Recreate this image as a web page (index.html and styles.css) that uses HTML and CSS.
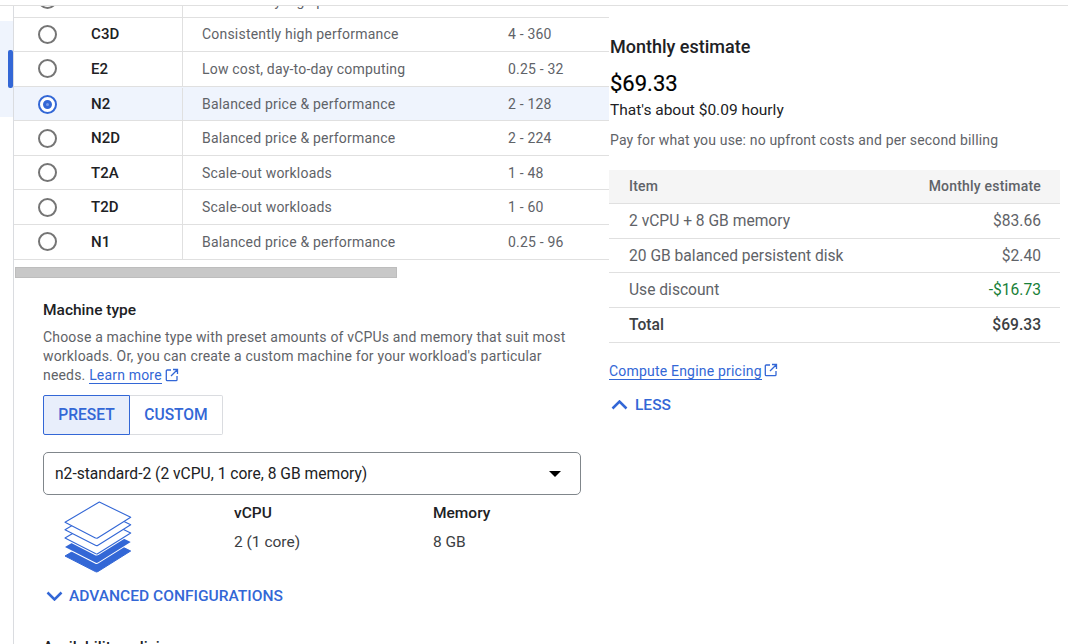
FILE: index.html
```html
<!DOCTYPE html>
<html lang="en">
<head>
<meta charset="utf-8">
<title>Machine configuration</title>
<link rel="stylesheet" href="styles.css">
</head>
<body>
<div class="page">
  <div class="topline"></div>
  <div class="layout">
    <aside class="rail">
      <div class="rail-active"><span class="rail-bar"></span></div>
    </aside>
    <main class="main">
      <div class="table">
        <div class="row row-clip"><div class="radio-cell"><span class="radio"></span></div><div class="name">C3</div><div class="desc">Consistently high performance</div><div class="range"></div></div>
        <div class="row"><div class="radio-cell"><span class="radio"></span></div><div class="name">C3D</div><div class="desc">Consistently high performance</div><div class="range">4 - 360</div></div>
        <div class="row"><div class="radio-cell"><span class="radio"></span></div><div class="name">E2</div><div class="desc">Low cost, day-to-day computing</div><div class="range">0.25 - 32</div></div>
        <div class="row row-selected"><div class="radio-cell"><span class="radio radio-on"><span class="radio-dot"></span></span></div><div class="name">N2</div><div class="desc">Balanced price &amp; performance</div><div class="range">2 - 128</div></div>
        <div class="row"><div class="radio-cell"><span class="radio"></span></div><div class="name">N2D</div><div class="desc">Balanced price &amp; performance</div><div class="range">2 - 224</div></div>
        <div class="row"><div class="radio-cell"><span class="radio"></span></div><div class="name">T2A</div><div class="desc">Scale-out workloads</div><div class="range">1 - 48</div></div>
        <div class="row"><div class="radio-cell"><span class="radio"></span></div><div class="name">T2D</div><div class="desc">Scale-out workloads</div><div class="range">1 - 60</div></div>
        <div class="row"><div class="radio-cell"><span class="radio"></span></div><div class="name">N1</div><div class="desc">Balanced price &amp; performance</div><div class="range">0.25 - 96</div></div>
      </div>
      <div class="scrollbar"></div>
      <section class="machine">
        <h2 class="machine-title">Machine type</h2>
        <p class="machine-text">Choose a machine type with preset amounts of vCPUs and memory that suit most workloads. Or, you can create a custom machine for your workload's particular needs. <a class="link" href="#">Learn more</a><svg class="ext ext-inline" viewBox="0 0 14 14" aria-hidden="true"><path d="M6 2H2.200a.9.9 0 0 0-.9.9v8.900c0 .5.4.9.9.9h8.900a.9.9 0 0 0 .9-.9V8M8 1.500h4.500V6M12.300 1.700 6 8" fill="none" stroke="#3367d6" stroke-width="1.300"/></svg></p>
        <div class="segments">
          <button class="seg seg-on">PRESET</button><button class="seg">CUSTOM</button>
        </div>
        <div class="select">
          <span>n2-standard-2 (2 vCPU, 1 core, 8 GB memory)</span>
          <span class="caret"></span>
        </div>
        <div class="specs">
          <svg class="stack" viewBox="0 0 68 74" aria-hidden="true">
            <path transform="translate(0 33.700)" d="M35.300 2 L66.700 17.300 L34 37.800 Q32.700 38.700 31.400 37.900 L1 22.300 Z" fill="#3367d6" stroke="#3367d6" stroke-linejoin="round"/>
            <path transform="translate(0 24.700)" d="M35.300 2 L66.700 17.300 L34 37.800 Q32.700 38.700 31.400 37.900 L1 22.300 Z" fill="#3367d6" stroke="#fff" stroke-width="2" stroke-linejoin="round" paint-order="stroke"/>
            <path transform="translate(0 15.700)" d="M35.300 2 L66.700 17.300 L34 37.800 Q32.700 38.700 31.400 37.900 L1 22.300 Z" fill="#fff" stroke="#fff" stroke-width="3.200"/>
            <path transform="translate(0 15.700)" d="M35.300 2 L66.700 17.300 L34 37.800 Q32.700 38.700 31.400 37.900 L1 22.300 Z" fill="#fff" stroke="#3367d6" stroke-width="1.100" stroke-linejoin="round"/>
            <path transform="translate(0 7.400)" d="M35.300 2 L66.700 17.300 L34 37.800 Q32.700 38.700 31.400 37.900 L1 22.300 Z" fill="#fff" stroke="#3367d6" stroke-width="1.100" stroke-linejoin="round"/>
            <path d="M35.300 2 L66.700 17.300 L34 37.800 Q32.700 38.700 31.400 37.900 L1 22.300 Z" fill="#fff" stroke="#3367d6" stroke-width="1.100" stroke-linejoin="round"/>
          </svg>
          <div class="spec spec-cpu"><div class="spec-label">vCPU</div><div class="spec-value">2 (1 core)</div></div>
          <div class="spec"><div class="spec-label">Memory</div><div class="spec-value">8 GB</div></div>
        </div>
        <div class="advanced">
          <svg class="chev" viewBox="0 0 16 10" aria-hidden="true"><path d="M1 1.500 8 8.500 15 1.500" fill="none" stroke="#3367d6" stroke-width="2.500"/></svg>
          <span>ADVANCED CONFIGURATIONS</span>
        </div>
        <h2 class="avail">Availability policies</h2>
      </section>
    </main>
    <section class="estimate">
      <div class="est-head">
        <h2 class="est-title">Monthly estimate</h2>
        <div class="est-price">$69.33</div>
        <div class="est-hourly">That's about $0.09 hourly</div>
        <p class="est-note">Pay for what you use: no upfront costs and per second billing</p>
      </div>
      <div class="bill">
        <div class="bill-row bill-head"><span>Item</span><span>Monthly estimate</span></div>
        <div class="bill-row"><span>2 vCPU + 8 GB memory</span><span>$83.66</span></div>
        <div class="bill-row"><span>20 GB balanced persistent disk</span><span>$2.40</span></div>
        <div class="bill-row"><span>Use discount</span><span class="green">-$16.73</span></div>
        <div class="bill-row bill-total"><span>Total</span><span>$69.33</span></div>
      </div>
      <div class="pricing"><a class="link" href="#">Compute Engine pricing</a><svg class="ext" viewBox="0 0 14 14" aria-hidden="true"><path d="M6 2H2.200a.9.9 0 0 0-.9.9v8.900c0 .5.4.9.9.9h8.900a.9.9 0 0 0 .9-.9V8M8 1.500h4.500V6M12.300 1.700 6 8" fill="none" stroke="#3367d6" stroke-width="1.300"/></svg></div>
      <div class="less">
        <svg class="chev" viewBox="0 0 16 10" aria-hidden="true"><path d="M1 8.500 8 1.500 15 8.500" fill="none" stroke="#3367d6" stroke-width="2.500"/></svg>
        <span>LESS</span>
      </div>
    </section>
  </div>
</div>
</body>
</html>
```
FILE: styles.css
```css
* { box-sizing: border-box; }
html, body { margin: 0; height: 100%; overflow: hidden; background: #fff; }
body { font-family: Roboto, "Noto Sans", sans-serif; color: #202124; }
.page { width: 1068px; height: 644px; overflow: hidden; }
.topline { height: 6px; border-bottom: 1px solid #e0e0e0; }
.layout { display: flex; align-items: flex-start; height: 638px; }

.rail { width: 14px; flex: none; height: 100%; border-right: 1px solid #dadce0; padding-top: 15px; }
.rail-active { height: 96px; background: #eff4fd; display: flex; align-items: center; justify-content: flex-end; }
.rail-bar { width: 5px; height: 38px; background: #3367d6; border-radius: 2px; }

.main { width: 595px; flex: none; }
.row { display: flex; align-items: center; height: 34.570px; border-bottom: 1px solid #e0e0e0; font-size: 14px; }
.row-clip { height: 11.600px; align-items: flex-end; overflow: hidden; }
.row-clip > div { height: 34px; flex-shrink: 0; }
.row-clip .radio-cell { margin-top: -23px; }
.row-clip .desc { line-height: 34px; height: 33px; }
.row-clip .name { color: transparent; }
.row-selected { background: #eff4fd; padding-top: 1px; }
.radio-cell { width: 68px; height: 100%; padding-left: 24px; display: flex; align-items: center; flex: none; }
.radio { width: 19px; height: 19px; border-radius: 50%; border: 2px solid #757575; display: flex; align-items: center; justify-content: center; background: #fff; flex: none; }
.radio-on { border-color: #3367d6; }
.radio-dot { width: 9px; height: 9px; border-radius: 50%; background: #7c9de6; border: 3px solid #3367d6; }
.name { width: 101px; height: 100%; display: flex; align-items: center; font-weight: 500; color: #202124; font-size: 15px; letter-spacing: 0.1px; padding-left: 9px; flex: none; border-right: 1px solid #e0e0e0; }
.desc { width: 325px; padding-left: 19px; color: #5f6368; letter-spacing: 0.2px; flex: none; }
.range { color: #5f6368; letter-spacing: 0.2px; }

.scrollbar { width: 382px; height: 11px; margin: 7.400px 0 0 1px; background: #c8c8c8; border: 1px solid #bdbdbd; }

.machine { padding: 22px 0 0 29px; }
.machine-title { margin: 0; font-size: 15.500px; font-weight: 500; line-height: 20px; color: #202124; }
.machine-text { margin: 8px 0 0; width: 530px; font-size: 14px; line-height: 19px; color: #5f6368; letter-spacing: 0.18px; }
.link { color: #3367d6; text-decoration: none; border-bottom: 1px solid #3367d6; }
.ext { width: 14px; height: 14px; margin-left: 3px; vertical-align: -2px; flex: none; }
.segments { display: flex; margin-top: 10px; height: 40px; }
.seg { font: 500 15.600px Roboto, sans-serif; color: #3367d6; background: #fff; border: 1px solid #dadce0; border-left: 0; border-radius: 0 2px 2px 0; width: 93px; padding: 0; }
.seg-on { width: 87px; background: #e8eefb; border: 1px solid #3367d6; border-radius: 2px 0 0 2px; }
.select { width: 538px; height: 43px; margin-top: 17px; border: 1px solid #80868b; border-radius: 5px; display: flex; align-items: center; justify-content: space-between; padding: 1px 19px 0 11px; font-size: 15.600px; color: #202124; }
.caret { width: 0; height: 0; border-left: 6px solid transparent; border-right: 6px solid transparent; border-top: 6px solid #000; }
.specs { display: flex; margin-top: 5px; height: 74px; }
.stack { width: 68px; height: 74px; margin-left: 21px; flex: none; }
.spec { padding-top: 3px; }
.spec-cpu { width: 199px; margin-left: 102px; }
.spec-label { font-size: 15.500px; font-weight: 500; line-height: 20px; color: #202124; }
.spec-value { font-size: 15.500px; line-height: 20px; margin-top: 9px; color: #3c4043; }
.advanced { display: flex; align-items: center; gap: 6px; margin: 12px 0 0 3px; height: 20px; font-size: 15.550px; font-weight: 500; color: #3367d6; }
.chev { width: 17px; height: 10px; flex: none; }
.avail { margin: 31px 0 0; font-size: 15.500px; font-weight: 500; line-height: 20px; color: #202124; }

.estimate { width: 451px; flex: none; padding-top: 31px; }
.est-head { padding-left: 1px; }
.est-title { margin: 0; font-size: 18px; font-weight: 500; line-height: 20px; color: #202124; }
.est-price { font-size: 22px; font-weight: 400; line-height: 28px; margin-top: 13px; color: #000; -webkit-text-stroke: 0.2px #000; }
.est-hourly { font-size: 15.500px; line-height: 20px; margin-top: 2px; color: #202124; }
.est-note { margin: 10px 0 0; font-size: 14px; line-height: 20px; color: #5f6368; letter-spacing: 0.16px; }
.bill { margin-top: 20px; }
.bill-row { display: flex; justify-content: space-between; align-items: center; height: 34.700px; padding: 0 19px 0 20px; border-bottom: 1px solid #e0e0e0; font-size: 15.600px; color: #5f6368; }
.bill-head { height: 34px; padding-bottom: 2px; background: #f5f5f5; font-size: 14px; font-weight: 500; letter-spacing: 0.2px; color: #5f6368; }
.bill-total { font-weight: 500; color: #3c4043; }
.green { color: #188038; }
.pricing { display: flex; align-items: center; margin-top: 20px; font-size: 14px; letter-spacing: 0.2px; }
.pricing .ext { margin-top: -2px; margin-left: 2px; }
.less { display: flex; align-items: center; gap: 7px; margin: 16px 0 0 2px; font-size: 15.500px; font-weight: 500; color: #3367d6; }
```
